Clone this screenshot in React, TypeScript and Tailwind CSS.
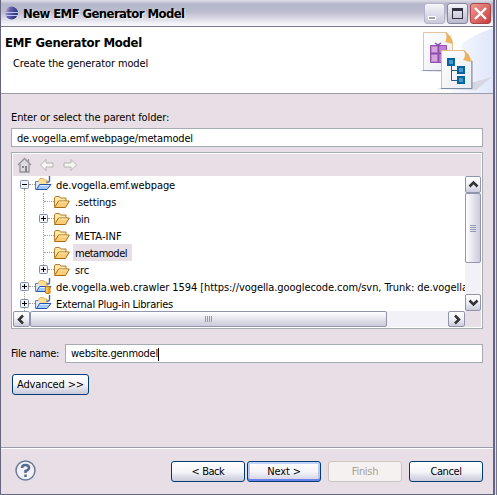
import React from "react";

function FolderOpen() {
  return (
    <svg width="16" height="16" viewBox="0 0 16 16" className="shrink-0">
      <path d="M.5 12.500V4l1-1.500h4l1 1.500h5.500v3" fill="#ffe9a6" stroke="#b8792c" />
      <path d="M.5 13.500L4.500 7h10.800L11.500 13.500z" fill="#fbcd76" stroke="#a96a18" />
      <path d="M5 8h8.500" stroke="#fff2c4" />
    </svg>
  );
}

function ProjectIcon({ svn = false }: { svn?: boolean }) {
  return (
    <svg width="17" height="17" viewBox="0 0 17 17" className="shrink-0">
      <path d="M3.500 9V4.500l1.500-2h3.500l1 1.500H12V9z" fill="#ffdf94" stroke="#e0b36a" />
      <path d="M3 5.500H.5v8h11" fill="#dcebff" stroke="#5580c4" />
      <path d="M1.500 13.500L4.500 8.500h11.500L12 13.500z" fill="#a3cbfa" stroke="#2c50b0" />
      <path d="M5 9.500h9" stroke="#dcedff" />
      <path d="M14.500 0v4.500q0 2-3 1.500" fill="none" stroke="#3c6a9c" strokeWidth="1.400" />
      {svn && (
        <g>
          <rect x="10.500" y="8.500" width="4.500" height="7" rx="1" fill="#f4a51c" stroke="#c97908" />
          <path d="M12 9.500v5" stroke="#ffe196" />
        </g>
      )}
    </svg>
  );
}

function Expander({ open = false }: { open?: boolean }) {
  return (
    <svg width="9" height="9" viewBox="0 0 9 9" className="shrink-0">
      <rect x=".5" y=".5" width="8" height="8" rx="1" fill="#f3f2f7" stroke="#7b8ba8" />
      <path d={open ? "M2 4.500h5" : "M2 4.500h5M4.500 2v5"} stroke="#000" />
    </svg>
  );
}

function Row({ label, depth, expander, project, svn, open, selected, spacing }: {
  label: string; depth: number; expander?: boolean; project?: boolean; svn?: boolean; open?: boolean; selected?: boolean; spacing: string;
}) {
  return (
    <div className={`relative flex h-[17px] shrink-0 items-center ${depth ? "pl-[26px]" : "pl-[7px]"}`}>
      <div className="flex w-[9px] shrink-0">{expander && <Expander open={open} />}</div>
      <div className={`h-px shrink-0 border-t border-dotted border-[#9d9d91] ${expander ? "w-[6px]" : "-ml-[4px] w-[10px]"}`} />
      <div className="flex w-[17px] shrink-0">{project ? <ProjectIcon svn={svn} /> : <FolderOpen />}</div>
      <span className={`ml-[2px] h-[17px] whitespace-pre pl-[2px] leading-[19px] ${spacing} ${selected ? "w-[59px] bg-[#e8dee6]" : ""}`}>{label}</span>
    </div>
  );
}

function ScrollButton({ path, className }: { path: string; className: string }) {
  return (
    <div className={`flex shrink-0 items-center justify-center rounded-[2px] border border-[#9294ac] bg-gradient-to-b from-white via-[#f0f0f6] to-[#cbcbdc] ${className}`}>
      <svg width="11" height="11" viewBox="0 0 11 11"><path d={path} fill="none" stroke="#333" strokeWidth="2.500" /></svg>
    </div>
  );
}

function Button({ children, className, kind = "normal" }: { children: string; className: string; kind?: "normal" | "default" | "disabled" }) {
  const look = {
    normal: "border-[#003c74] bg-gradient-to-b from-white via-[#f5f5fa] to-[#c9c9da] text-black",
    default: "border-[#003c74] bg-gradient-to-b from-white via-[#f5f5fa] to-[#d0d0e0] text-black shadow-[inset_0_2px_0_#bfd5fb,inset_0_-2px_0_#6982ee,inset_2px_0_0_#b9c9ee,inset_-2px_0_0_#b9c9ee]",
    disabled: "border-[#ccc5bd] bg-[#f5f1f0] text-[#a5a294]",
  }[kind];
  return <button className={`flex h-[21px] shrink-0 items-center justify-center rounded-[3px] border pt-px whitespace-pre ${look} ${className}`}>{children}</button>;
}

function WizardBanner() {
  return (
    <svg width="93" height="66" viewBox="0 1 93 66">
      <defs>
        <linearGradient id="glow" x1="0" x2="1"><stop stopColor="#fafbff" /><stop offset="1" stopColor="#dfe6fb" /></linearGradient>
        <linearGradient id="paper" x1="0" y1="0" x2="1" y2="1"><stop stopColor="#fff" /><stop offset="1" stopColor="#e8ebf3" /></linearGradient>
      </defs>
      <path d="M62 18Q74 8 94 2v65H50z" fill="url(#glow)" />
      <path d="M20 45l5-2h23v3zM36 63l38-7 18-5-16 13z" fill="#d6d7e2" />
      <path d="M23.500 6.500h23l6 10v28h-29z" fill="url(#paper)" stroke="#e2c59c" />
      <path d="M23 44.500h29" stroke="#8f9bac" />
      <path d="M45 6q3 5 0 10l8 2Q52 9 45 6z" fill="#eeb25c" />
      <path d="M30.500 19.500h16v17h-16z" fill="#bd82cf" stroke="#9350ad" />
      <path d="M30 27.500h17M38.500 19v18M35 17l3 2 3-2" fill="none" stroke="#8a4da8" strokeWidth="1.500" />
      <path d="M32 21h5v5h-5zM32 29h5v6h-5z" fill="#d6a5de" />
      <path d="M41.500 24.500h23l7 10v28h-30z" fill="url(#paper)" stroke="#e2bd88" />
      <path d="M41 62.500h31V35" fill="none" stroke="#7d8da3" />
      <path d="M63 24q4 5 0 10l8 2Q70 27 63 24z" fill="#eeb25c" />
      <path d="M51.500 39v15.500H58M51.500 44.500H58" fill="none" stroke="#245b86" />
      <g fill="#499acb" stroke="#07639b" strokeWidth="2"><path d="M48 33h6v6h-6zM58 41h6v6h-6zM58 51h6v6h-6z" /></g>
    </svg>
  );
}

export default function App() {
  return (
    <div className="flex h-[495px] w-[497px] overflow-hidden bg-[#e8dee6] font-['DejaVu_Sans_Condensed','DejaVu_Sans',sans-serif] text-[11px] leading-[14px] text-black">
      <div className="flex h-[495px] w-[495px] shrink-0 flex-col border-r-2 border-b border-l border-[#656582] bg-[#e8dee6]">
        <header className="flex h-[27px] shrink-0 items-center border-b border-[#77778f] bg-[linear-gradient(to_bottom,#dedee8_0px,#b6b6cb_4px,#bcbccf_12px,#dcdce7_19px,#f8f8fb_25px)] pl-[3px]">
          <svg width="15" height="15" viewBox="0 0 15 15">
            <defs><linearGradient id="orb" x1="0" y1="0" x2="1" y2=".3"><stop stopColor="#f6c3c6" /><stop offset=".4" stopColor="#6a66b4" /><stop offset="1" stopColor="#2d2d78" /></linearGradient></defs>
            <circle cx="7.500" cy="7" r="6.500" fill="url(#orb)" />
            <path d="M1 6.500h13M1 9.500h13" stroke="#b9c6f8" />
          </svg>
          <h1 className="ml-[4px] whitespace-pre pt-px text-[13px] font-bold tracking-[-0.6px] [text-shadow:1px_1px_0_#eee]">New EMF Generator Model</h1>
          <div className="ml-auto flex gap-[2px] pr-[2px]">
            <div className="flex size-[21px] rounded-[3px] border border-[#b4b4c8] bg-gradient-to-b from-[#f5f5fa] to-[#c8c8da]"><i className="mt-[12px] ml-[3px] h-[4px] w-[8px] border border-white bg-[#a0a0b4]" /></div>
            <div className="flex size-[21px] items-center justify-center rounded-[3px] border border-[#8585a0] bg-gradient-to-b from-[#f5f5fa] to-[#b9b9ce]"><i className="size-[11px] border border-t-[3px] border-[#30303e]" /></div>
            <div className="flex size-[21px] items-center justify-center rounded-[3px] border border-[#a9444b] bg-gradient-to-br from-[#ef9993] to-[#c63a3d]"><svg width="13" height="13" viewBox="0 0 13 13"><path d="M1 1l11 11M12 1L1 12" stroke="#fff" strokeWidth="2.400" /></svg></div>
          </div>
        </header>
        <section className="flex h-[67px] shrink-0 border-b border-[#9c9ca8] bg-white">
          <div className="pt-[8px] pl-[4px]">
            <h2 className="whitespace-pre text-[13px] leading-[15px] font-bold tracking-[-0.3px]">EMF Generator Model</h2>
            <p className="mt-[7px] pl-[8px] whitespace-pre tracking-[-0.12px]">Create the generator model</p>
          </div>
          <div className="ml-auto"><WizardBanner /></div>
        </section>
        <main className="flex h-[354px] shrink-0 flex-col border-b border-[#9c9ca8] pr-[10px] pl-[10px]">
          <label className="mt-[17px] h-[14px] whitespace-pre tracking-[-0.12px]">Enter or select the parent folder:</label>
          <div className="mt-[3px] h-[19px] border border-[#a5acb2] bg-white pl-[5px] leading-[19px] tracking-[-0.16px]">de.vogella.emf.webpage/metamodel</div>
          <div className="mt-[5px] flex h-[177px] flex-col border border-[#a5acb2] bg-white p-px">
            <div className="flex h-[22px] shrink-0 items-center gap-[7px] bg-[#e8dee6] pl-[4px]">
              <svg width="15" height="16" viewBox="0 0 15 16"><path d="M1 8l6.500-6.500L14 8M3 7v8h9V7M11.500 5V2" fill="#ddd8dd" stroke="#92929b" strokeWidth="1.300" /><path d="M5 9h2v2H5zM8 9h2v6H8z" fill="#85858f" /></svg>
              <svg width="16" height="14" viewBox="0 0 16 14"><path d="M1.500 7L7 1.500v3.500h7v4H7v3.500z" fill="#f7f5f2" stroke="#b9b4b2" /></svg>
              <svg width="16" height="14" viewBox="0 0 16 14"><path d="M14.500 7L9 1.500v3.500H2v4h7v3.500z" fill="#f7f5f2" stroke="#b9b4b2" /></svg>
            </div>
            <div className="flex h-[135px] shrink-0">
              <div className="relative min-w-0 flex-1 overflow-hidden">
                <i className="absolute top-[13px] left-[11px] h-[122px] border-l border-dotted border-[#9d9d91]" />
                <i className="absolute top-[17px] left-[30px] h-[76px] border-l border-dotted border-[#9d9d91]" />
                <Row label="de.vogella.emf.webpage" depth={0} expander open project spacing="tracking-[-0.1px]" />
                <Row label=".settings" depth={1} spacing="tracking-[-0.15px]" />
                <Row label="bin" depth={1} expander spacing="tracking-[-0.3px]" />
                <Row label="META-INF" depth={1} spacing="tracking-[0.1px]" />
                <Row label="metamodel" depth={1} selected spacing="tracking-[-0.5px]" />
                <Row label="src" depth={1} expander spacing="tracking-[-0.1px]" />
                <Row label="de.vogella.web.crawler 1594 [https://vogella.googlecode.com/svn, Trunk: de.vogella" depth={0} expander project svn spacing="tracking-[-0.07px]" />
                <Row label="External Plug-in Libraries" depth={0} expander project spacing="tracking-[-0.27px]" />
              </div>
              <div className="flex w-[16px] flex-col bg-[#f2f1f8]">
                <ScrollButton path="M1.500 7.500l4-4 4 4" className="h-[17px]" />
                <div className="flex h-[70px] flex-col items-center justify-center gap-px rounded-[2px] border border-[#9294ac] bg-gradient-to-r from-white to-[#cacadc]">{[0,1,2,3].map(i => <i key={i} className="h-px w-[6px] bg-[#8e9ab5]" />)}</div>
                <ScrollButton path="M1.500 3.500l4 4 4-4" className="mt-auto h-[17px]" />
              </div>
            </div>
            <div className="flex h-[16px] shrink-0 bg-[#f2f1f8]">
              <ScrollButton path="M7 1.500l-4 4 4 4" className="w-[17px]" />
              <div className="flex w-[357px] items-center justify-center gap-px rounded-[2px] border border-[#9294ac] bg-gradient-to-b from-white to-[#cacadc]">{[0,1,2,3].map(i => <i key={i} className="h-[6px] w-px bg-[#8e9ab5]" />)}</div>
              <ScrollButton path="M4 1.500l4 4-4 4" className="ml-auto w-[17px]" />
              <div className="w-[16px] bg-[#e8dee6]" />
            </div>
          </div>
          <div className="mt-[15px] flex h-[19px] items-center"><label className="w-[54px] whitespace-pre pt-px tracking-[-0.3px]">File name:</label><div className="flex h-[19px] flex-1 items-center border border-[#a5acb2] bg-white pt-px pl-[5px] tracking-[-0.25px]">website.genmodel<i className="h-[13px] w-px bg-black" /></div></div>
          <div className="mt-[11px] ml-[1px]"><Button className="w-[77px] tracking-[-0.15px]">{"Advanced >>"}</Button></div>
        </main>
        <footer className="flex flex-1 items-center border-t border-white pl-[14px]">
          <svg width="21" height="21" viewBox="0 0 21 21" className="-mt-[2px]"><circle cx="10.500" cy="10.500" r="9.500" fill="#f4f1f6" stroke="#697b99" strokeWidth="1.500" /><path d="M7 8q0-3 3.500-3t3.500 3q0 2-3.500 3v2M10.500 14.500v2.500" fill="none" stroke="#546b8f" strokeWidth="2.500" /></svg>
          <div className="ml-auto flex pr-[10px]"><Button className="w-[74px] tracking-[-0.45px]">{"< Back"}</Button><div className="w-[2px]" /><Button className="w-[74px] tracking-[-0.15px]" kind="default">{"Next >"}</Button><div className="w-[7px]" /><Button className="w-[74px] tracking-[-0.3px]" kind="disabled">Finish</Button><div className="w-[7px]" /><Button className="w-[74px] tracking-[-0.4px]">Cancel</Button></div>
        </footer>
      </div>
      <div className="w-px bg-[#e0dfe8]" />
      <div className="w-px bg-[#77778f]" />
    </div>
  );
}
